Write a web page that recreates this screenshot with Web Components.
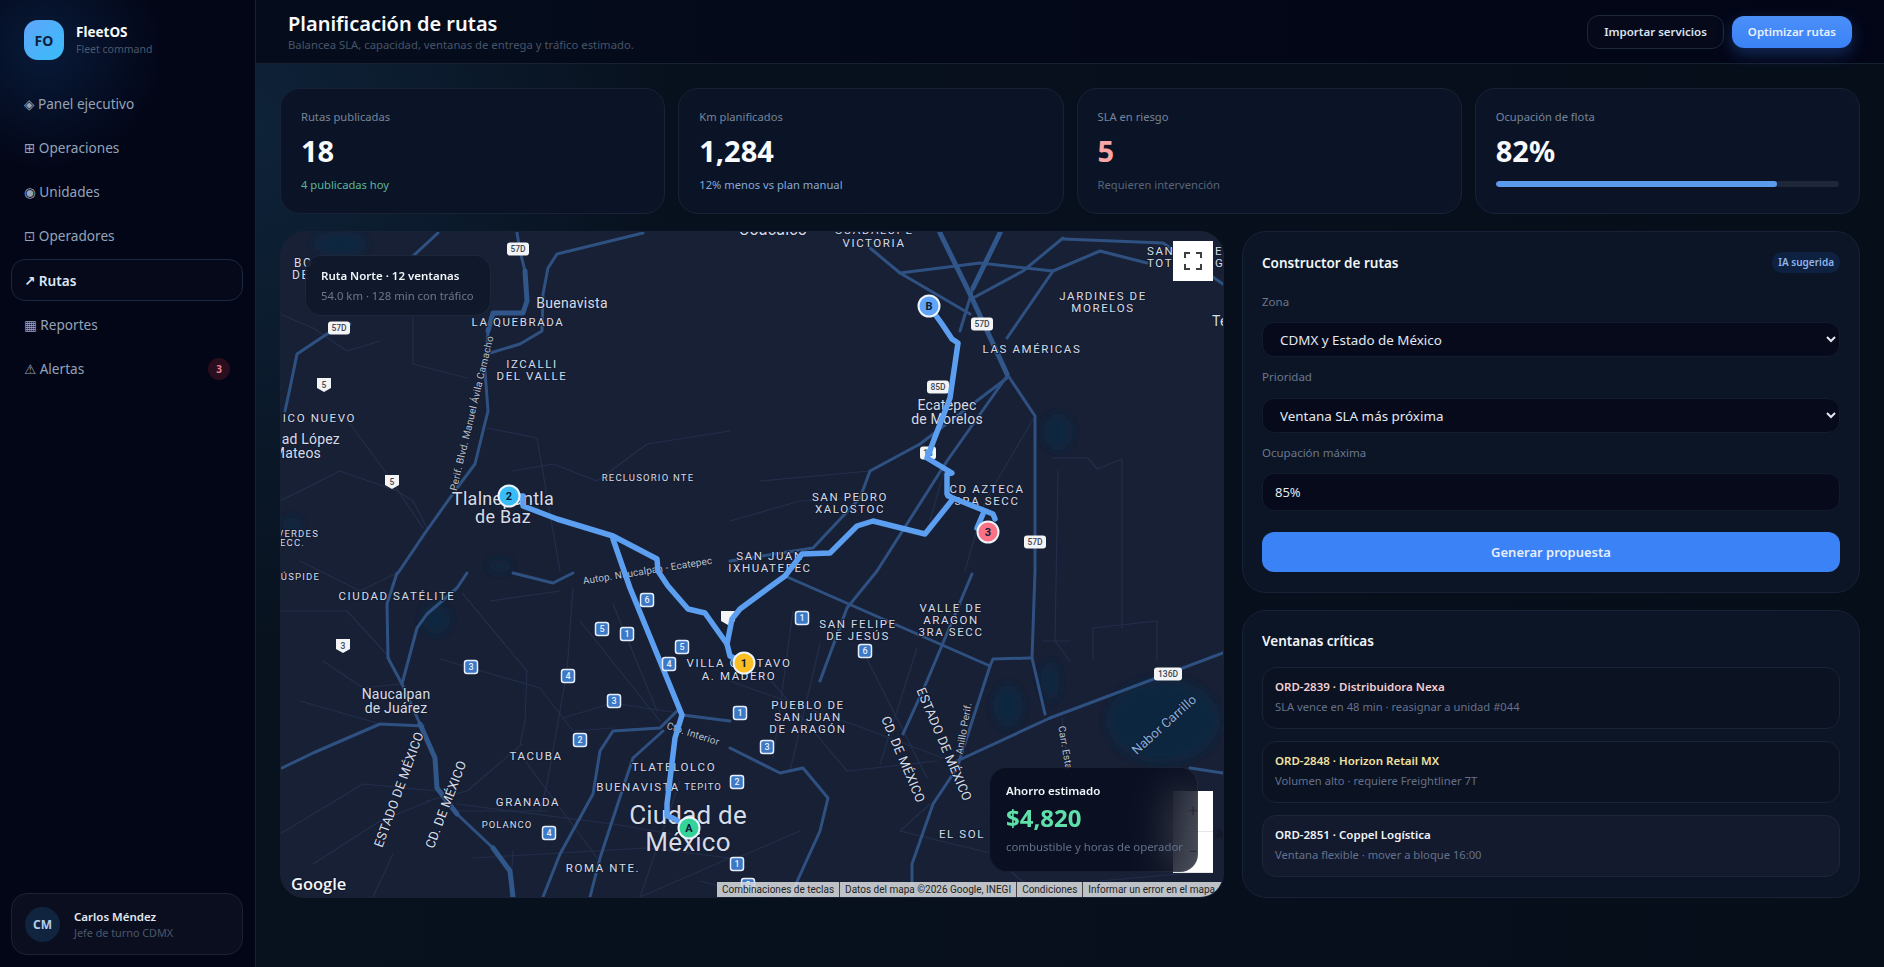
<!DOCTYPE html>
<html lang="es">
<head>
<meta charset="utf-8">
<title>FleetOS</title>
<style>
	html, body { margin: 0; height: 100%; background: #050b18; overflow: hidden; }
	body { font-family: "Noto Sans", "DejaVu Sans", sans-serif; color: #e2e8f0; }
</style>
</head>
<body>
<fleet-app>
	<fleet-sidebar slot="side">
		<nav-item icon="◈">Panel ejecutivo</nav-item>
		<nav-item icon="⊞">Operaciones</nav-item>
		<nav-item icon="◉">Unidades</nav-item>
		<nav-item icon="⊡">Operadores</nav-item>
		<nav-item icon="↗" active>Rutas</nav-item>
		<nav-item icon="▦">Reportes</nav-item>
		<nav-item icon="⚠" badge="3">Alertas</nav-item>
	</fleet-sidebar>
	<page-header slot="head"></page-header>
	<stat-card label="Rutas publicadas" value="18" note="4 publicadas hoy" note-color="#5db497"></stat-card>
	<stat-card label="Km planificados" value="1,284" note="12% menos vs plan manual" note-color="#86a9d8"></stat-card>
	<stat-card label="SLA en riesgo" value="5" value-color="#fca5a5" note="Requieren intervención" note-color="#566479"></stat-card>
	<stat-card label="Ocupación de flota" value="82%" progress="82"></stat-card>
	<route-map slot="map"></route-map>
	<route-builder slot="aside"></route-builder>
	<critical-list slot="aside">
		<critical-item title="ORD-2839 · Distribuidora Nexa" color="#f3cfd2" sub="SLA vence en 48 min · reasignar a unidad #044"></critical-item>
		<critical-item title="ORD-2848 · Horizon Retail MX" color="#f2e2a0" sub="Volumen alto · requiere Freightliner 7T"></critical-item>
		<critical-item title="ORD-2851 · Coppel Logística" color="#f1f5f9" sub="Ventana flexible · mover a bloque 16:00" soft></critical-item>
	</critical-list>
</fleet-app>

<script>
class FleetApp extends HTMLElement {
	constructor() {
		super();
		this.attachShadow({ mode: "open" });
		this.shadowRoot.innerHTML = `
			<style>
				:host { display: grid; grid-template-columns: 256px minmax(0, 1fr); height: 100vh; background:
					radial-gradient(420px 520px at 256px 130px, #0e2238 0%, rgba(14,34,56,0) 100%), linear-gradient(90deg, #08121f, #060e1a); }
				main { display: flex; flex-direction: column; min-width: 0; }
				.content { padding: 24px 24px 0 24px; display: flex; flex-direction: column; gap: 17px; }
				.stats { display: grid; grid-template-columns: repeat(4, minmax(0, 1fr)); gap: 13px; }
				.work { display: grid; grid-template-columns: minmax(0, 1fr) 618px; gap: 18px; height: 666px; }
				.aside { display: flex; flex-direction: column; gap: 17px; }
			</style>
			<slot name="side"></slot>
			<main>
				<slot name="head"></slot>
				<div class="content">
					<div class="stats"><slot></slot></div>
					<div class="work">
						<slot name="map"></slot>
						<div class="aside"><slot name="aside"></slot></div>
					</div>
				</div>
			</main>
		`;
	}
}
customElements.define("fleet-app", FleetApp);

class FleetSidebar extends HTMLElement {
	constructor() {
		super();
		this.attachShadow({ mode: "open" });
		this.shadowRoot.innerHTML = `
			<style>
				:host { display: flex; flex-direction: column; box-sizing: border-box; height: 100vh; padding: 20px 12px 12px 11px;
					border-right: 1px solid #182233; background: radial-gradient(120px 120px at 44px 50px, #081a38 0%, rgba(8,26,56,0) 100%), #030617; }
				.brand { display: flex; align-items: center; gap: 12px; padding-left: 13px; height: 40px; }
				.logo { width: 40px; height: 40px; border-radius: 14px; display: grid; place-items: center; font-size: 14px; font-weight: 700; color: #0b1f3f;
					background: linear-gradient(135deg, #60a5fa, #38bdf8); }
				.name { font-size: 13.5px; font-weight: 700; color: #f8fafc; line-height: 18px; }
				.tag { font-size: 10.5px; color: #4b586c; line-height: 16px; }
				nav { display: flex; flex-direction: column; gap: 2.25px; margin-top: 22px; }
				.user { margin-top: auto; height: 62px; box-sizing: border-box; display: flex; align-items: center; gap: 14px; padding: 0 13px;
					border: 1px solid #1a2336; border-radius: 16px; background: #0a0e1f; }
				.avatar { width: 35px; height: 35px; border-radius: 50%; background: #10233f; color: #b6cdec; display: grid; place-items: center; font-size: 12px; font-weight: 700; }
				.who { font-size: 11.5px; font-weight: 600; color: #e2e8f0; line-height: 17px; }
				.role { font-size: 10.8px; color: #4b586c; line-height: 15px; }
			</style>
			<div class="brand">
				<div class="logo">FO</div>
				<div><div class="name">FleetOS</div><div class="tag">Fleet command</div></div>
			</div>
			<nav><slot></slot></nav>
			<div class="user">
				<div class="avatar">CM</div>
				<div><div class="who">Carlos Méndez</div><div class="role">Jefe de turno CDMX</div></div>
			</div>
		`;
	}
}
customElements.define("fleet-sidebar", FleetSidebar);

class NavItem extends HTMLElement {
	constructor() {
		super();
		this.attachShadow({ mode: "open" });
		const badge = this.getAttribute("badge");
		this.shadowRoot.innerHTML = `
			<style>
				:host { display: flex; align-items: center; justify-content: space-between; height: 42px; box-sizing: border-box; padding: 0 12px 0 12px;
					border: 1px solid transparent; border-radius: 14px; font-size: 13.6px; color: #94a3b8; }
				:host([active]) { border-color: #1c2740; color: #dbe6f7; font-weight: 600; background: #050919; }
				.ic { font-family: "DejaVu Sans", sans-serif; font-size: 13.5px; }
				.badge { width: 22px; height: 22px; border-radius: 50%; background: #2a0e1e; color: #e8808f; font-size: 10px; font-weight: 700; display: grid; place-items: center; }
			</style>
			<span><span class="ic">${this.getAttribute("icon")}</span> <slot></slot></span>
			${badge ? `<span class="badge">${badge}</span>` : ""}
		`;
	}
}
customElements.define("nav-item", NavItem);

class PageHeader extends HTMLElement {
	constructor() {
		super();
		this.attachShadow({ mode: "open" });
		this.shadowRoot.innerHTML = `
			<style>
				:host { display: flex; align-items: center; justify-content: space-between; height: 64px; box-sizing: border-box; padding: 1px 32px 0;
					border-bottom: 1px solid #162131; background: linear-gradient(90deg, #050d1c, #030617 70%); }
				h1 { margin: 0; font-size: 20px; line-height: 25px; font-weight: 600; color: #f8fafc; }
				p { margin: 1px 0 0; font-size: 11.3px; line-height: 16px; color: #46546a; }
				.actions { display: flex; gap: 8px; align-items: center; margin-top: -1px; }
				button { font: inherit; font-size: 11.5px; font-weight: 600; border-radius: 12px; height: 34px; padding: 0 16px; }
				.ghost { background: #050919; color: #dbe3ee; border: 1px solid #1e293b; }
				.main { color: #e8f1ff; border: 0; height: 32px; box-shadow: 0 6px 16px rgba(59,130,246,.3); background: linear-gradient(#4b8ff8, #3b82f6); }
			</style>
			<div><h1>Planificación de rutas</h1><p>Balancea SLA, capacidad, ventanas de entrega y tráfico estimado.</p></div>
			<div class="actions"><button class="ghost">Importar servicios</button><button class="main">Optimizar rutas</button></div>
		`;
	}
}
customElements.define("page-header", PageHeader);

class StatCard extends HTMLElement {
	constructor() {
		super();
		this.attachShadow({ mode: "open" });
		const a = (n) => this.getAttribute(n);
		const foot = a("progress")
			? `<div class="bar"><i style="width:${a("progress")}%"></i></div>`
			: `<div class="note" style="color:${a("note-color")}">${a("note")}</div>`;
		this.shadowRoot.innerHTML = `
			<style>
				:host { display: block; box-sizing: border-box; height: 126px; padding: 20px; border: 1px solid #172236; border-radius: 20px; background: #0b1426; }
				.label { font-size: 11.2px; line-height: 16px; color: #76849a; }
				.value { margin-top: 7px; font-size: 29px; line-height: 38px; font-weight: 700; color: #f8fafc; }
				.note { margin-top: 7px; font-size: 11.2px; line-height: 16px; }
				.bar { margin-top: 11px; height: 6px; border-radius: 4px; background: #1e2739; overflow: hidden; }
				.bar i { display: block; height: 100%; background: #5a9bee; border-radius: 4px; }
			</style>
			<div class="label">${a("label")}</div>
			<div class="value" style="${a("value-color") ? "color:" + a("value-color") : ""}">${a("value")}</div>
			${foot}
		`;
	}
}
customElements.define("stat-card", StatCard);

// all map coordinates are page pixels, the viewBox offsets them
const HEAVY = [
	[[940,232],[970,293],[1007,373]],
	[[1000,232],[973,287]],
	[[525,270],[527,300],[523,312],[493,312],[488,330]],
	[[420,723],[435,757],[437,787],[457,813]],
	[[493,847],[510,870],[513,896]]
];
const MAJOR = [
	[[517,232],[520,250],[525,270]],
	[[488,330],[485,370],[488,410],[483,430],[475,463],[457,487],[425,532],[398,572]],
	[[643,232],[557,253],[548,267],[543,293],[542,330],[520,343],[490,352]],
	[[438,232],[413,255]],
	[[350,323],[327,333],[297,353],[290,387],[285,410]],
	[[397,572],[387,603],[388,657],[402,683],[420,723]],
	[[457,813],[493,847]],
	[[467,572],[457,587],[427,613],[417,627],[402,683]],
	[[282,767],[313,752],[380,723],[423,725]],
	[[680,707],[660,727],[613,730],[600,750],[593,793],[560,853],[543,896]],
	[[663,730],[633,757],[623,787],[600,857],[590,896]],
	[[513,572],[553,582],[573,572]],
	[[1007,373],[1035,415],[1035,570],[1032,657],[1045,713]],
	[[973,287],[960,330]],
	[[1063,238],[1163,242],[1223,283]],
	[[1063,237],[1023,270],[973,297]],
	[[900,272],[980,262],[1053,270],[1100,250],[1147,262]],
	[[870,247],[900,272],[970,313]],
	[[1053,270],[1007,337]],
	[[1007,375],[947,460],[877,570],[847,607],[820,680]],
	[[1007,377],[920,443],[870,470],[860,497],[813,547],[730,560]],
	[[785,575],[990,665],[993,658],[1030,657]],
	[[990,665],[957,767],[933,803],[912,863],[912,896]],
	[[1050,717],[1223,652]],
	[[1050,717],[957,760]],
	[[730,747],[780,772],[803,767],[828,797],[820,830],[790,896]],
	[[1190,767],[1223,772]],
	[[972,573],[927,680],[903,733]],
	[[730,720],[682,714]]
];
const MINOR = [
	[[463,593],[527,670],[525,720],[520,743]], [[440,658],[540,687],[573,730],[613,727]], [[563,717],[613,702],[730,720]],
	[[573,587],[567,670],[547,783],[540,810]], [[457,803],[613,823],[730,843]], [[453,810],[547,810]], [[522,743],[467,790],[427,800]],
	[[580,620],[660,720]], [[613,603],[657,710]], [[523,757],[597,857]], [[280,610],[347,610],[390,657]], [[323,660],[363,687],[400,683]],
	[[300,700],[380,723]], [[280,833],[363,783],[437,790]], [[313,863],[380,820],[430,800]], [[473,857],[647,847],[730,857]],
	[[513,850],[510,896]], [[373,896],[393,853]], [[280,313],[313,327],[347,350],[380,340]], [[413,317],[413,363],[467,377]],
	[[350,423],[387,473],[423,527]], [[487,427],[537,437],[553,530],[560,570]], [[397,490],[413,500],[427,527]],
	[[730,430],[647,443],[597,480],[553,463],[513,470]], [[730,680],[863,727],[943,757]], [[793,610],[773,757]], [[820,643],[790,770]],
	[[863,650],[927,777]], [[917,647],[880,763]], [[763,670],[847,770]], [[847,770],[937,760]], [[900,830],[990,852]], [[900,830],[930,803]],
	[[1052,457],[1088,457],[1097,468],[1122,458],[1122,627]], [[1058,470],[1055,640],[1070,660]], [[1043,640],[1070,640]], [[1093,627],[1157,620],[1157,660]],
	[[1093,627],[1093,658]], [[700,880],[760,896]], [[640,896],[730,857]], [[680,780],[640,896]], [[730,860],[800,830]],
	[[1062,717],[1068,765]], [[947,460],[930,520]], [[1035,415],[985,500],[965,570]], [[870,470],[760,480]], [[730,520],[800,500],[860,497]],
	[[990,852],[1040,896]], [[1100,880],[1190,872]], [[280,500],[340,470],[397,490]], [[300,560],[360,590],[397,572]], [[490,600],[560,590]]
];
const ROUTE = [
	[[689,827],[673,817],[667,815],[667,803],[675,737],[682,714],[630,587],[613,538]],
	[[509,495],[523,495],[523,505],[557,518],[613,535],[657,558],[658,570],[668,585],[688,608],[705,612],[727,643],[730,655],[744,662]],
	[[727,643],[732,618],[740,608],[767,588],[785,575],[802,553],[830,552],[857,525],[873,520],[925,533],[953,498],[947,493],[947,473],[952,472],[927,457],[950,397],[958,342],[952,338],[942,323],[929,305]],
	[[948,495],[993,513],[995,518]],
	[[983,513],[977,527],[988,531]]
];
const WATER = [[1163,720,56,42],[1058,431,14,18],[436,618,14,15],[1008,705,14,21],[340,243,26,13],[1050,680,9,19],[292,525,9,9],[500,565,11,6]];
// text, x, y, size, rotation, anchor, tracking
const LABELS = [
	["BO",294,266,12,0,"start",1.5], ["DE",292,278,12,0,"start",1.5],
	["Buenavista",572,307,14,0,"middle",.3], ["LA QUEBRADA",518,325,11.5,0,"middle",1.6], ["IZCALLI",532,367,11.5,0,"middle",1.6], ["DEL VALLE",532,379,11.5,0,"middle",1.6],
	["MÉXICO NUEVO",356,421,11.5,0,"end",1.6], ["Ciudad López",340,443,14,0,"end",.2], ["Mateos",321,457,14,0,"end",.2],
	["RECLUSORIO NTE",648,480,9.5,0,"middle",1.2], ["Tlalnepantla",503,504,18,0,"middle",.3], ["de Baz",503,522,18,0,"middle",.3],
	["VERDES",319,536,9.5,0,"end",1.2], ["SECC.",305,545,9.5,0,"end",1.2], ["CÚSPIDE",320,579,9.5,0,"end",1.2],
	["CIUDAD SATÉLITE",397,599,11.5,0,"middle",1.6], ["Naucalpan",396,698,14,0,"middle",.2], ["de Juárez",396,712,14,0,"middle",.2],
	["ESTADO DE MÉXICO",403,790,13,-70,"middle",.2], ["CD. DE MÉXICO",450,805,13,-69,"middle",.2],
	["TACUBA",536,759,11.5,0,"middle",1.6], ["GRANADA",528,805,11.5,0,"middle",1.6], ["POLANCO",507,827,9.5,0,"middle",1], ["ROMA NTE.",603,871,11.5,0,"middle",1.6],
	["TLATELOLCO",674,770,11.5,0,"middle",1.6], ["BUENAVISTA",638,790,11.5,0,"middle",1.6], ["TEPITO",703,789,9.5,0,"middle",1],
	["Ciudad de",688,823,26,0,"middle",.2], ["México",688,850,26,0,"middle",.2],
	["Cto. Interior",692,736,10,18,"middle",.2,"#b9c1ce"], ["Autop. Naucalpan - Ecatepec",648,573,10,-9,"middle",.1,"#b9c1ce"], ["Perif. Blvd. Manuel Ávila Camacho",475,413,10,-76.5,"middle",.2,"#b9c1ce"],
	["Anillo Perif.",967,728,10,-80,"middle",.1,"#b9c1ce"], ["Carr. Esta",1062,747,10,80,"middle",.1,"#b9c1ce"], ["Nabor Carrillo",1167,727,13,-42,"middle",.1,"#7fb0dc"],
	["VILLA GUSTAVO",739,666,11.5,0,"middle",1.6], ["A. MADERO",739,679,11.5,0,"middle",1.6],
	["PUEBLO DE",808,708,11.5,0,"middle",1.6], ["SAN JUAN",808,720,11.5,0,"middle",1.6], ["DE ARAGÓN",808,732,11.5,0,"middle",1.6],
	["SAN FELIPE",858,627,11.5,0,"middle",1.6], ["DE JESÚS",858,639,11.5,0,"middle",1.6],
	["VALLE DE",951,611,11.5,0,"middle",1.6], ["ARAGON",951,623,11.5,0,"middle",1.6], ["3RA SECC",951,635,11.5,0,"middle",1.6],
	["ESTADO DE MÉXICO",940,745,13,67,"middle",.2], ["CD. DE MÉXICO",899,760,13,67,"middle",.2], ["EL SOL",962,837,11.5,0,"middle",1.6],
	["Coacalco",773,234,16,0,"middle",.2], ["GUADALUPE",874,233,11.5,0,"middle",1.6], ["VICTORIA",874,246,11.5,0,"middle",1.6],
	["SAN",1147,254,11.5,0,"start",1.6], ["TOT",1147,266,11.5,0,"start",1.6], ["E",1215,254,11.5,0,"start",1.6], ["G",1215,266,11.5,0,"start",1.6],
	["JARDINES DE",1103,299,11.5,0,"middle",1.6], ["MORELOS",1103,311,11.5,0,"middle",1.6], ["Te",1212,325,14,0,"start",.2], ["LAS AMÉRICAS",1032,352,11.5,0,"middle",1.6],
	["Ecatepec",947,409,14,0,"middle",.2], ["de Morelos",947,423,14,0,"middle",.2],
	["SAN PEDRO",850,500,11.5,0,"middle",1.6], ["XALOSTOC",850,512,11.5,0,"middle",1.6], ["CD AZTECA",987,492,11.5,0,"middle",1.6], ["3RA SECC",987,504,11.5,0,"middle",1.6],
	["SAN JUAN",770,559,11.5,0,"middle",1.6], ["IXHUATEPEC",770,571,11.5,0,"middle",1.6], ["ac",1216,836,12,0,"start",0,"#111827"]
];
const BLUE_SHIELDS = [[647,599,6],[602,628,5],[627,633,1],[682,646,5],[669,663,4],[471,666,3],[568,675,4],[614,700,3],[580,739,2],[549,832,4],[802,617,1],[865,650,6],[740,712,1],[767,746,3],[737,781,2],[737,863,1],[748,884,2]];
const WHITE_SHIELDS = [[518,248,"57D"],[339,327,"57D"],[982,323,"57D"],[938,386,"85D"],[928,452,"18"],[1035,541,"57D"],[1168,673,"136D"]];
const STATE_SHIELDS = [[324,384,5],[392,481,5],[343,645,3],[728,617,""]];
const PINS = [[689,827,"A","#34d399"],[929,305,"B","#60a5fa"],[744,662,"1","#fbbf24"],[509,495,"2","#38bdf8"],[988,531,"3","#fb7185"]];

class RouteMap extends HTMLElement {
	constructor() {
		super();
		this.attachShadow({ mode: "open" });
		const pts = (p) => p.map((q) => q.join(",")).join(" ");
		const line = (list, color, w) => list.map((p) => `<polyline points="${pts(p)}" fill="none" stroke="${color}" stroke-width="${w}" stroke-linejoin="round" stroke-linecap="round"/>`).join("");
		const water = WATER.map(([x, y, rx, ry]) => `<ellipse cx="${x}" cy="${y}" rx="${rx}" ry="${ry}" fill="#0f2640"/>`).join("");
		const labels = LABELS.map(([t, x, y, s, r, a, ls, c]) => `<text class="lab" x="${x}" y="${y}" font-size="${s}" text-anchor="${a}" letter-spacing="${ls}" fill="${c || "#d6dce6"}" ${r ? `transform="rotate(${r} ${x} ${y})"` : ""}>${t}</text>`).join("");
		const blue = BLUE_SHIELDS.map(([x, y, n]) => `<rect x="${x - 6.5}" y="${y - 6.5}" width="13" height="13" rx="2.5" fill="#3b78c6" stroke="#e6eefb" stroke-width="1.5"/><text class="sh" x="${x}" y="${y + 3.2}" font-size="9" fill="#e6eefb">${n}</text>`).join("");
		const white = WHITE_SHIELDS.map(([x, y, n]) => {
			const w = String(n).length * 6 + 4;
			return `<rect x="${x - w / 2}" y="${y - 6.5}" width="${w}" height="13" rx="3" fill="#f3f4f6"/><text class="sh" x="${x}" y="${y + 3.2}" font-size="8.5" fill="#3f4654">${n}</text>`;
		}).join("");
		const state = STATE_SHIELDS.map(([x, y, n]) => `<path d="M${x - 7} ${y - 7}h14v10l-7 4-7-4z" fill="#f3f4f6"/><text class="sh" x="${x}" y="${y + 2.5}" font-size="8.5" fill="#3f4654">${n}</text>`).join("");
		const pins = PINS.map(([x, y, t, c]) => `<circle cx="${x}" cy="${y}" r="10.5" fill="${c}" stroke="#eef4fb" stroke-width="2"/><text class="pin" x="${x}" y="${y + 3.8}" font-size="11" fill="#0b1a33">${t}</text>`).join("");
		this.shadowRoot.innerHTML = `
			<style>
				:host { display: block; position: relative; overflow: hidden; border-radius: 24px; border: 1px solid #172236; background: #172035; }
				svg { position: absolute; left: 0; top: 0; width: 100%; height: 100%; font-family: Roboto, sans-serif; }
				.lab { paint-order: stroke; stroke: #151c31; stroke-width: 2px; font-weight: 400; }
				.sh { text-anchor: middle; font-weight: 500; }
				.pin { text-anchor: middle; font-weight: 700; }
				.google { font-family: "Open Sans", sans-serif; font-weight: 600; paint-order: stroke; stroke: #10172a; stroke-width: 2px; }
				.fs { position: absolute; left: 892px; top: 9px; width: 40px; height: 40px; background: #fff; display: grid; place-items: center; }
				.zoomer { position: absolute; left: 892px; top: 559px; width: 40px; height: 81px; background: #fff; color: #555; font: 400 16px/40px Roboto, sans-serif; text-align: center; }
				.zoomer div { height: 40px; border-bottom: 1px solid #e6e6e6; }
				.tip, .save { position: absolute; box-sizing: border-box; border: 1px solid rgba(148,163,184,.1); -webkit-backdrop-filter: blur(14px); backdrop-filter: blur(14px); }
				.tip { left: 24px; top: 23px; width: 186px; height: 61px; padding: 10px 15px; border-radius: 16px; background: rgba(15,23,42,.82); font-family: "Noto Sans", sans-serif; }
				.tip b { display: block; font-size: 11.5px; line-height: 20px; font-weight: 600; color: #f1f5f9; }
				.tip span { display: block; font-size: 11.3px; line-height: 20px; color: #6b788d; }
				.save { left: 708px; top: 535px; width: 209px; height: 105px; padding: 13px 16px; border-radius: 18px; background: rgba(5,10,26,.72); font-family: "Noto Sans", sans-serif; -webkit-backdrop-filter: blur(20px); backdrop-filter: blur(20px); }
				.save b { display: block; font-size: 11.5px; line-height: 20px; font-weight: 600; color: #f1f5f9; }
				.save strong { display: block; margin-top: 1px; font-size: 24px; line-height: 32px; font-weight: 700; color: #5fe0ab; }
				.save span { display: block; margin-top: 4px; font-size: 11.4px; line-height: 18px; color: #64718a; white-space: nowrap; }
				.attr { position: absolute; right: 0; bottom: 0; left: 436px; height: 15px; background: rgba(214,216,220,.88); color: #222; font: 400 10px/15px Roboto, sans-serif; display: flex; white-space: nowrap; overflow: hidden; }
				.attr span { padding: 0 5px; border-right: 1px solid #444; }
				.attr span:last-child { border: 0; }
			</style>
			<svg viewBox="281 231 942 665" preserveAspectRatio="none" aria-label="Mapa de ruta">
				<defs><filter id="soft" x="-30%" y="-30%" width="160%" height="160%"><feGaussianBlur stdDeviation="4"/></filter></defs>
				<rect x="281" y="231" width="942" height="665" fill="#172035"/>
				<g filter="url(#soft)">${water}</g>
				${line(MINOR, "#232e4b", 1.2)}
				${line(MAJOR, "#2f5182", 3)}
				${line(HEAVY, "#315689", 5)}
				${labels}
				${white}${state}
				<text class="google" x="291" y="889" font-size="16.5" fill="#f3f4f6">Google</text>
				${line(ROUTE, "#5c9ff0", 5.5)}
				${blue}${pins}
			</svg>
			<div class="fs"><svg style="position:static;width:18px;height:18px" viewBox="0 0 18 18"><path d="M1 6V1h5M12 1h5v5M17 12v5h-5M6 17H1v-5" fill="none" stroke="#3c4043" stroke-width="2"/></svg></div>
			<div class="zoomer"><div>+</div><div>−</div></div>
			<div class="tip"><b>Ruta Norte · 12 ventanas</b><span>54.0 km · 128 min con tráfico</span></div>
			<div class="save"><b>Ahorro estimado</b><strong>$4,820</strong><span>combustible y horas de operador</span></div>
			<div class="attr"><span>Combinaciones de teclas</span><span>Datos del mapa ©2026 Google, INEGI</span><span>Condiciones</span><span>Informar un error en el mapa</span></div>
		`;
	}
}
customElements.define("route-map", RouteMap);

class RouteBuilder extends HTMLElement {
	constructor() {
		super();
		this.attachShadow({ mode: "open" });
		this.shadowRoot.innerHTML = `
			<style>
				:host { display: block; box-sizing: border-box; height: 362px; padding: 20px 19px 20px 19px; border: 1px solid #172236; border-radius: 24px; background: #0c1526; }
				.head { display: flex; align-items: center; justify-content: space-between; height: 21px; margin-bottom: 20px; }
				h2 { margin: 0; font-size: 13.5px; font-weight: 600; color: #f1f5f9; }
				.chip { height: 21px; padding: 0 6px; border-radius: 11px; background: #0f2140; color: #8fb4e8; font-size: 10px; font-weight: 600; line-height: 21px; }
				label { display: block; font-size: 11.5px; line-height: 17px; color: #6a778c; margin-bottom: 12px; }
				label.wide { margin-bottom: 13px; }
				select, input { display: block; width: 100%; box-sizing: border-box; font: inherit; font-size: 13.4px; color: #e2e8f0; background: #060a1b; border: 1px solid #131c2f; border-radius: 12px; color-scheme: dark; outline: 0; }
				select { height: 35px; padding: 0 13px; margin-bottom: 11px; }
				input { height: 38px; padding: 0 12px; font-size: 13px; }
				button { display: block; width: 100%; height: 40px; margin-top: 21px; border: 0; border-radius: 12px; background: #3b82f6; color: #e6efff; font: inherit; font-size: 13px; font-weight: 600; }
			</style>
			<div class="head"><h2>Constructor de rutas</h2><span class="chip">IA sugerida</span></div>
			<label>Zona</label>
			<select><option>CDMX y Estado de México</option></select>
			<label class="wide">Prioridad</label>
			<select><option>Ventana SLA más próxima</option></select>
			<label>Ocupación máxima</label>
			<input value="85%">
			<button>Generar propuesta</button>
		`;
	}
}
customElements.define("route-builder", RouteBuilder);

class CriticalList extends HTMLElement {
	constructor() {
		super();
		this.attachShadow({ mode: "open" });
		this.shadowRoot.innerHTML = `
			<style>
				:host { display: block; box-sizing: border-box; height: 288px; padding: 20px 19px; border: 1px solid #172236; border-radius: 24px; background: #0c1526; }
				h2 { margin: 0 0 15px; font-size: 13.5px; line-height: 21px; font-weight: 600; color: #f1f5f9; }
				.list { display: flex; flex-direction: column; gap: 12px; }
			</style>
			<h2>Ventanas críticas</h2>
			<div class="list"><slot></slot></div>
		`;
	}
}
customElements.define("critical-list", CriticalList);

class CriticalItem extends HTMLElement {
	constructor() {
		super();
		this.attachShadow({ mode: "open" });
		this.shadowRoot.innerHTML = `
			<style>
				:host { display: block; box-sizing: border-box; height: 62px; padding: 9px 12px; border: 1px solid #182338; border-radius: 14px; background: #0b1222; }
				:host([soft]) { background: #131a2e; border-color: #1d2639; }
				.t { font-size: 11.5px; line-height: 20px; font-weight: 600; }
				.s { font-size: 11.2px; line-height: 20px; color: #64718a; }
			</style>
			<div class="t" style="color:${this.getAttribute("color")}">${this.getAttribute("title")}</div>
			<div class="s">${this.getAttribute("sub")}</div>
		`;
	}
}
customElements.define("critical-item", CriticalItem);
</script>
</body>
</html>
